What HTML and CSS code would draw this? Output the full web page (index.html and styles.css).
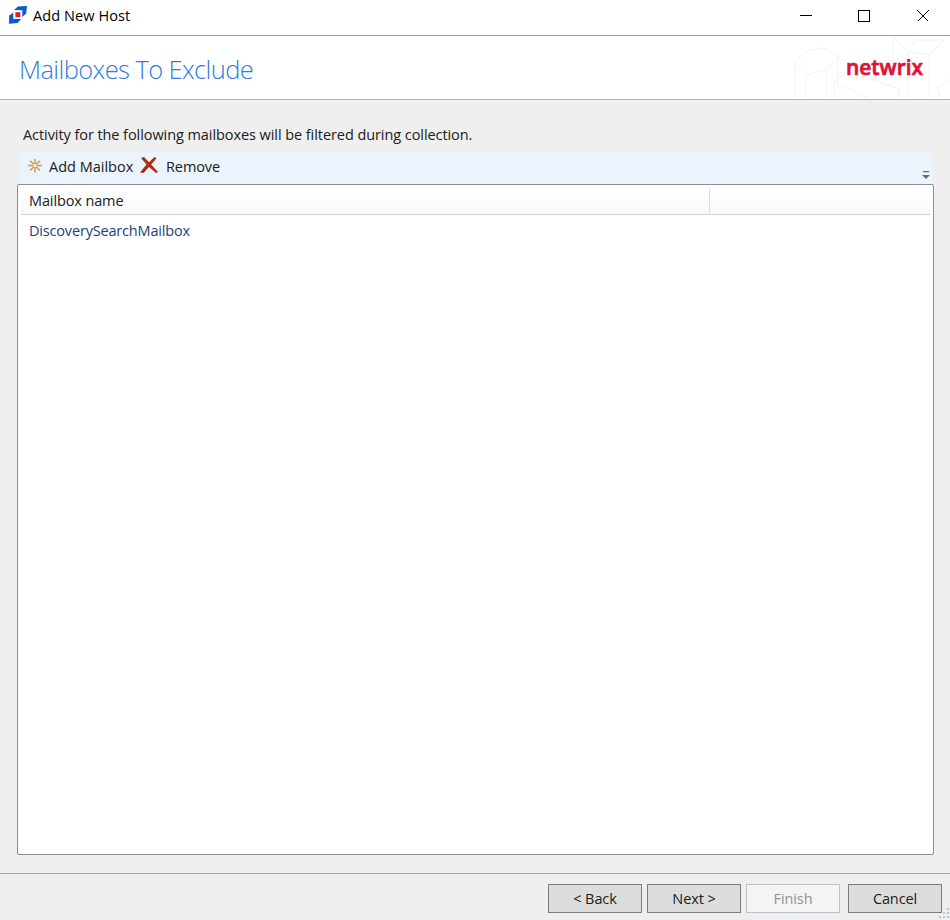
FILE: index.html
```html
<!DOCTYPE html>
<html lang="en">
<head>
<meta charset="utf-8">
<title>Add New Host</title>
<link rel="stylesheet" href="styles.css">
</head>
<body>
<div class="window">
  <header class="titlebar">
    <svg class="app-icon" width="18" height="18" viewBox="0 0 18 18">
      <path fill="#0a5bd0" d="M5 4 9 .5 18 0 17.200 7.500 13.300 11V4.300z"/>
      <path fill="#0a5bd0" d="M.2 9.500 4.300 6.400V13H12.200L8.500 17 0 17.800z"/>
      <rect x="6.400" y="6.200" width="5" height="5" fill="#d81f35" stroke="#fff" stroke-width="2.400" paint-order="stroke"/>
    </svg>
    <span class="window-title">Add New Host</span>
    <svg class="controls" width="130" height="12" viewBox="0 0 130 12" fill="none" stroke="#000" stroke-width="1">
      <path d="M0 5.500h12"/>
      <rect x="58.500" y=".5" width="11" height="11"/>
      <path d="M117.500 .5l11 11M128.500 .5l-11 11"/>
    </svg>
  </header>
  <section class="banner">
    <h1>Mailboxes To Exclude</h1>
    <svg class="brand" width="160" height="62" viewBox="0 0 160 62">
      <g fill="none" stroke="#eef2fb">
        <path d="M3 27 18 14 33 12 47 21 35 34 15 39zM4 27v35M15 39v23M35 34v28M47 21v31M43 46 58 34M70 40 109 53 107 62M43 46 76 62M43 46v16M102 0v48M102 0l15 16 22 3 13-15M117 16v46M117 16l8-12 28 0M138 19v43M160 43l-14 8 4 11"/>
      </g>
      <text class="logo" x="55" y="38.500" textLength="77" lengthAdjust="spacingAndGlyphs">netwrix</text>
    </svg>
  </section>
  <main class="content">
    <p class="intro">Activity for the following mailboxes will be filtered during collection.</p>
    <div class="toolbar">
      <svg width="16" height="16" viewBox="0 0 16 16" fill="none" stroke="#d9993c" stroke-width="1.500">
        <path d="M8 1v5M8 9v5.500M1 7.500h5.500M9.500 7.500H15M3 2.800l3.800 3.500M9.200 8.700 13 12.500M13 2.800 9.200 6.300M6.800 8.700 3 12.500"/>
      </svg>
      <span class="tool add">Add Mailbox</span>
      <svg class="remove-icon" width="18" height="17" viewBox="0 0 18 17">
        <path fill="#b22a12" d="M1 1 4 0 9 5.200 14.500 0 16.500 1.200 11.200 7.500 18 15 16 16 9 10 3.500 16 0 15.500 6.500 7.600z"/>
      </svg>
      <span class="tool remove">Remove</span>
      <svg class="overflow" width="8" height="9" viewBox="0 0 8 9"><path fill="#686b70" d="M1 0h6v1.300H1zM0 4h8L4 8z"/></svg>
    </div>
    <div class="list">
      <div class="list-head"><div class="col-name">Mailbox name</div><div class="col-rest"></div></div>
      <div class="list-row">DiscoverySearchMailbox</div>
    </div>
  </main>
  <footer class="footer">
    <button class="btn back"><span>&lt; Back</span></button>
    <button class="btn next"><span>Next &gt;</span></button>
    <button class="btn finish" disabled><span>Finish</span></button>
    <button class="btn cancel"><span>Cancel</span></button>
    <svg class="grip" width="12" height="12" viewBox="0 0 12 12" fill="#bcc5d8"><path d="M9 0h2v2H9zM9 4h2v2H9zM9 8h2v2H9zM5 4h2v2H5zM5 8h2v2H5zM1 8h2v2H1z"/></svg>
  </footer>
</div>
</body>
</html>
```
FILE: styles.css
```css
* { box-sizing: border-box; }
body { margin: 0; overflow: hidden; font: 14.5px/20px "Open Sans", "Noto Sans", sans-serif; color: #202020; }
.window { position: relative; width: 950px; height: 920px; display: flex; flex-direction: column; background: #efefef; }
.titlebar { height: 36px; flex: none; display: flex; align-items: flex-start; background: #fff; border-bottom: 1px solid #a0a0a0; }
.app-icon { margin: 6px 0 0 9px; }
.window-title { margin: 6px 0 0 6px; color: #000; white-space: nowrap; letter-spacing: .08px; }
.controls { margin: 10px 20px 0 auto; shape-rendering: crispEdges; }
.banner { height: 64px; flex: none; display: flex; justify-content: space-between; background: #fff; border-bottom: 1px solid #b4b4b4; }
h1 { margin: 16px 0 0 19px; font-size: 25.5px; line-height: 34px; font-weight: 300; color: #2f7de0; letter-spacing: -.6px; white-space: nowrap; }
.brand { margin-right: -1px; }
.logo { font: 600 22px "Open Sans", sans-serif; fill: #dd1236; stroke: #dd1236; stroke-width: .7px; stroke-linejoin: round; }
.content { flex: 1; display: flex; flex-direction: column; padding: 25px 16px 18px 17px; }
.intro { margin: 0 0 7px 6px; white-space: nowrap; letter-spacing: -.07px; }
.toolbar { height: 32px; flex: none; display: flex; margin: 0 1px 0 2px; padding-left: 8px; background: #ebf3fd; border-radius: 3px; }
.toolbar > svg:first-child { margin-top: 6px; }
.tool { margin-top: 5px; white-space: nowrap; letter-spacing: 0; }
.add { width: 91px; padding-left: 6px; }
.remove-icon { margin: 5px 0 0 6px; }
.remove { margin-left: 8px; letter-spacing: -.1px; }
.overflow { margin: 19px 3px 0 auto; }
.list { flex: 1; border: 1px solid #878c96; border-radius: 2px; background: #fff; padding: 2px 3px; }
.list-head { height: 28px; display: flex; border-bottom: 1px solid #d3d3d3; background: linear-gradient(#fff 30%, #f6f7f7); }
.col-name { width: 689px; padding: 4px 0 0 8px; border-right: 1px solid #dedede; letter-spacing: -.12px; }
.col-rest { flex: 1; }
.list-row { padding: 6px 8px; color: #263d7c; letter-spacing: -.18px; }
.footer { height: 47px; flex: none; display: flex; align-items: flex-start; justify-content: flex-end; padding: 10px 8px 0 0; border-top: 1px solid #a5a5a5; }
.btn { width: 94px; height: 29px; padding: 0; border: 1px solid #7b7b7b; background: #dddddd; font: inherit; color: #202020; letter-spacing: -.1px; }
.btn + .btn { margin-left: 5px; }
.btn + .btn.cancel { margin-left: 8px; }
.btn.finish { border-color: #bdc2c6; background: #f4f4f4; color: #929292; }
.grip { position: absolute; right: 0; bottom: 0; }
```
